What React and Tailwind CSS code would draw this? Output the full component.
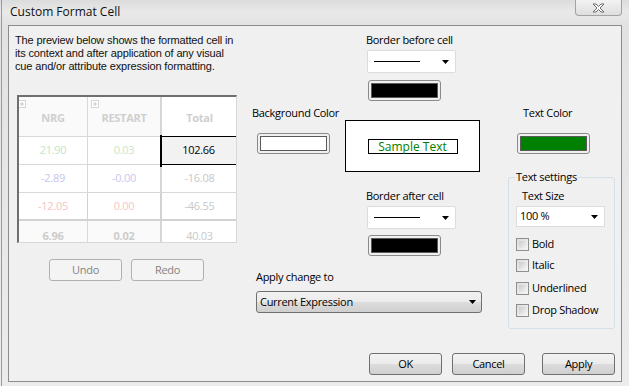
import React from "react";

const F = "font-['Open_Sans',sans-serif] tracking-[-0.3px]";

function Arrow() {
  return (
    <svg width="7" height="4" viewBox="0 0 7 4" className="block">
      <polygon points="0,0 7,0 3.5,4" fill="#000" />
    </svg>
  );
}

function Swatch({ color, className = "" }) {
  return (
    <div className={`w-[73px] h-[21px] rounded-[3px] border border-[#8a8a8a] bg-[#f0f0f0] p-[2px] ${className}`}>
      <div className="h-full w-full border border-[#5a5a5a]" style={{ background: color }} />
    </div>
  );
}

function LineDropdown({ className = "" }) {
  return (
    <div className={`w-[89px] h-[23px] rounded-[2px] border border-[#dcdcdc] bg-white flex items-center pl-[6px] pr-[6px] ${className}`}>
      <div className="w-[46px] h-px bg-black" />
      <div className="flex-1" />
      <Arrow />
    </div>
  );
}

function Btn({ children, className = "", disabled = false }) {
  return (
    <div
      className={`w-[73px] h-[22px] rounded-[3px] border flex items-center justify-center text-[11px] ${
        disabled
          ? "border-[#adb2b5] bg-[#f4f4f4] text-[#838383]"
          : "border-[#707070] bg-[linear-gradient(#f2f2f2_0%,#ebebeb_50%,#dddddd_51%,#cfcfcf_100%)] text-black"
      } ${className}`}
    >
      {children}
    </div>
  );
}

function Check({ label, className = "" }) {
  return (
    <div className={`flex items-center ${className}`}>
      <div className="w-[13px] h-[13px] border border-[#8e8f8f] bg-[linear-gradient(135deg,#dcdcdc,#f6f6f6)] p-[2px]">
        <div className="w-full h-full bg-[linear-gradient(135deg,#cbcbcb,#f2f2f2)]" />
      </div>
      <span className="ml-[3px] leading-[14px] text-[11px] text-black whitespace-nowrap">{label}</span>
    </div>
  );
}

function PlusBox({ className = "" }) {
  return (
    <div className={`w-[8px] h-[8px] border border-[#d6d6d6] bg-white flex items-center justify-center ${className}`}>
      <svg width="6" height="6" viewBox="0 0 6 6">
        <path d="M3 1v4M1 3h4" stroke="#c8c8c8" strokeWidth="1" />
      </svg>
    </div>
  );
}

function Table() {
  const cell = "flex items-center justify-center text-[11px]";
  return (
    <div className="relative ml-[2px] mt-[22px] w-[220px] h-[148px] border-l-2 border-t-2 border-[#6f6f6f] border-r border-b border-r-[#d8d8d8] border-b-[#d8d8d8] bg-[#fafafa] overflow-hidden">
      <div className="grid grid-cols-[69px_74px_75px] grid-rows-[40px_28px_28px_28px_22px]">
        <div className={`${cell} relative border-r border-b border-[#d9d9d9] font-bold text-[#cfcfcf] pt-[3px]`}>
          <PlusBox className="absolute left-[-1px] top-[3px]" />
          NRG
        </div>
        <div className={`${cell} relative border-r-2 border-b border-[#d6d6d6] font-bold text-[#cfcfcf] pt-[3px]`}>
          <PlusBox className="absolute left-[3px] top-[3px]" />
          RESTART
        </div>
        <div className={`${cell} border-b border-[#d9d9d9] font-bold text-[#cfcfcf] bg-white pt-[3px]`}>Total</div>

        <div className={`${cell} border-r border-b border-[#d9d9d9] text-[#c4e4c4] bg-white`}>21.90</div>
        <div className={`${cell} border-r-2 border-b border-[#d6d6d6] text-[#c8e6c8] bg-white`}>0.03</div>
        <div className={`${cell} border-b border-[#d9d9d9] bg-white`} />

        <div className={`${cell} border-r border-b border-[#d9d9d9] text-[#c6c6f2] bg-white`}>-2.89</div>
        <div className={`${cell} border-r-2 border-b border-[#d6d6d6] text-[#c8c8f2] bg-white`}>-0.00</div>
        <div className={`${cell} border-b border-[#d9d9d9] text-[#c8c8c8] bg-white`}>-16.08</div>

        <div className={`${cell} border-r border-b-2 border-[#d2d2d2] text-[#f4c4c4] bg-white`}>-12.05</div>
        <div className={`${cell} border-r-2 border-b-2 border-[#d2d2d2] text-[#f4c6c6] bg-white`}>0.00</div>
        <div className={`${cell} border-b-2 border-[#d2d2d2] text-[#c8c8c8] bg-white`}>-46.55</div>

        <div className={`${cell} border-r border-[#d9d9d9] font-bold text-[#cdcdcd] pt-[8px]`}>6.96</div>
        <div className={`${cell} border-r-2 border-[#d6d6d6] font-bold text-[#cdcdcd] pt-[8px]`}>0.02</div>
        <div className={`${cell} text-[#c8c8c8] pt-[8px] bg-white`}>40.03</div>
      </div>
      <div className="absolute left-[141px] top-[39px] w-[77px] h-[29px] border-t border-b border-black bg-[#f2f2f2] flex items-center justify-center text-[11px] text-black">
        102.66
      </div>
      <div className="absolute left-[141px] top-[38px] w-[2px] h-[32px] bg-black" />
    </div>
  );
}

export default function App() {
  return (
    <div className={`${F} relative w-[629px] h-[386px] bg-[linear-gradient(180deg,#dcdcdc_0px,#e9e9e9_12px,#e2e2e2_25px,#ececec_100%)] text-black overflow-hidden`}>
      <div className="absolute left-[1px] top-0 w-px h-full bg-[#9a9a9a]" />
      {/* title bar */}
      <div className="h-[25px] flex items-start">
        <div className="pl-[10px] pt-[3px] text-[12px] leading-[18px] text-[#111] tracking-normal whitespace-nowrap">Custom Format Cell</div>
        <div className="flex-1" />
        <div className="mr-[7px] w-[47px] h-[16px] rounded-b-[4px] border border-t-0 border-[#a2a2a2] bg-[linear-gradient(#f2f2f2,#dedede)] flex items-center justify-center">
          <svg width="13" height="10" viewBox="0 0 13 10">
            <path
              d="M1 1h3l2.5 2.5L9 1h3L8 5l4 4H9L6.5 6.5 4 9H1l4-4z"
              fill="#fdfdfd"
              stroke="#6a6a6a"
              strokeWidth="1"
              strokeLinejoin="round"
            />
          </svg>
        </div>
      </div>

      {/* client */}
      <div className="ml-[8px] w-[614px] h-[357px] border border-[#8c8c8c] bg-[#f0f0f0] flex flex-col text-[11px]">
        <div className="h-[327px] flex items-start">
          {/* left column */}
          <div className="pl-[6px] w-[239px] flex flex-col">
            <div className="mt-[8px] flex flex-col font-['Liberation_Sans',Arial,sans-serif] tracking-[-0.15px] text-[11px] text-[#111] whitespace-nowrap">
              <span className="h-[13px] leading-[13px]">The preview below shows the formatted cell in</span>
              <span className="h-[13px] leading-[13px]">its context and after application of any visual</span>
              <span className="h-[13px] leading-[13px]">cue and/or attribute expression formatting.</span>
            </div>
            <Table />
            <div className="mt-[16px] ml-[34px] flex gap-[9px]">
              <Btn disabled>Undo</Btn>
              <Btn disabled>Redo</Btn>
            </div>
          </div>

          {/* middle column */}
          <div className="w-[236px] flex flex-col whitespace-nowrap">
            <div className="mt-[7px] pl-[118px] leading-[14px]">Border before cell</div>
            <LineDropdown className="mt-[3px] ml-[119px]" />
            <Swatch color="#000" className="mt-[7px] ml-[120px]" />
            <div className="mt-[5px] flex items-start">
              <div className="w-[97px] flex flex-col">
                <div className="pl-[4px] leading-[14px]">Background Color</div>
                <Swatch color="#fff" className="mt-[13px] ml-[9px]" />
              </div>
              <div className="mt-[14px] w-[135px] h-[52px] border border-black bg-white flex items-center justify-center">
                <div className="w-[90px] h-[15px] border border-black flex items-center justify-center text-[12px] leading-[13px] text-[#008000] tracking-normal">
                  Sample Text
                </div>
              </div>
            </div>
            <div className="mt-[17px] pl-[118px] leading-[14px]">Border after cell</div>
            <LineDropdown className="mt-[3px] ml-[119px]" />
            <Swatch color="#000" className="mt-[6px] ml-[120px]" />
            <div className="mt-[14px] pl-[8px] leading-[14px]">Apply change to</div>
            <div className="mt-[7px] ml-[8px] w-[226px] h-[22px] rounded-[3px] border border-[#707070] bg-[linear-gradient(#f2f2f2_0%,#ebebeb_50%,#dddddd_51%,#cfcfcf_100%)] flex items-center pl-[3px] pr-[5px]">
              <span>Current Expression</span>
              <div className="flex-1" />
              <Arrow />
            </div>
          </div>

          {/* right column */}
          <div className="ml-[23px] w-[107px] flex flex-col whitespace-nowrap">
            <div className="mt-[80px] pl-[16px] leading-[14px]">Text Color</div>
            <Swatch color="#008000" className="mt-[13px] ml-[10px]" />
            <div className="relative mt-[23px] ml-[1px] w-[107px] h-[152px] rounded-[3px] border border-[#d5dfe5] flex flex-col">
              <div className="absolute -top-[8px] left-[6px] px-[1px] bg-[#f0f0f0] leading-[14px]">Text settings</div>
              <div className="mt-[11px] pl-[13px] leading-[14px]">Text Size</div>
              <div className="mt-[3px] ml-[7px] w-[89px] h-[21px] border border-[#dcdcdc] bg-white flex items-center pl-[3px] pr-[6px]">
                <span>100 %</span>
                <div className="flex-1" />
                <Arrow />
              </div>
              <Check label="Bold" className="mt-[10px] ml-[7px]" />
              <Check label="Italic" className="mt-[7px] ml-[7px]" />
              <Check label="Underlined" className="mt-[9px] ml-[7px]" />
              <Check label="Drop Shadow" className="mt-[8px] ml-[7px]" />
            </div>
          </div>
        </div>
        <div className="flex justify-end pr-[6px]">
          <Btn>OK</Btn>
          <Btn className="ml-[10px]">Cancel</Btn>
          <Btn className="ml-[17px]">Apply</Btn>
        </div>
      </div>
    </div>
  );
}
